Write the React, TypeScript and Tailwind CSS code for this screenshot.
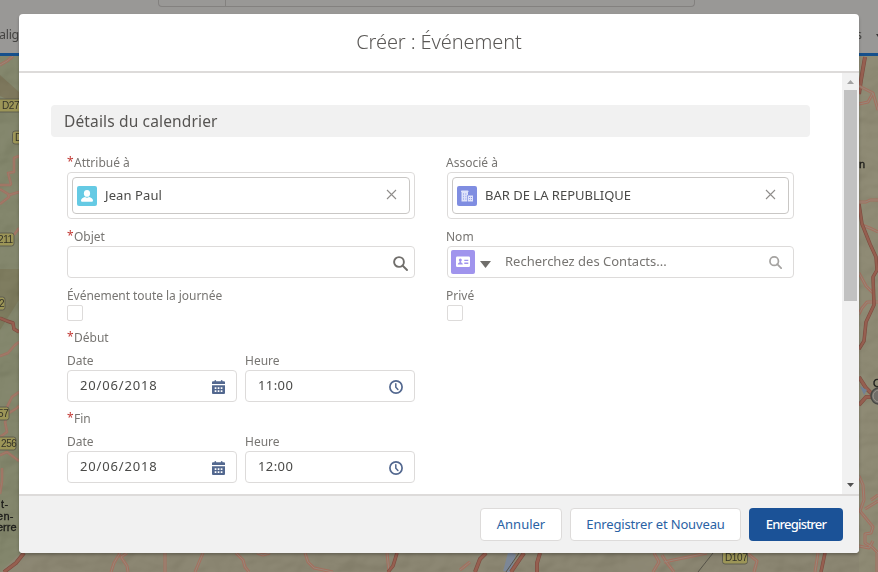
import type { ReactNode } from 'react';

const red = '#965f50';
const pink = '#a4705f';

function Road({ d, w = 3, main = false }: { d: string; w?: number; main?: boolean }) {
  return (
    <g fill="none" strokeLinejoin="round">
      <path d={d} stroke={main ? '#7d4b3f' : pink} strokeWidth={w} />
      <path d={d} stroke={main ? red : '#96887a'} strokeWidth={main ? w - 1.2 : w - 2} />
    </g>
  );
}

function Sign({ x, y, w, text, tx }: { x: number; y: number; w: number; text: string; tx: number }) {
  return (
    <g>
      <rect x={x} y={y} width={w} height={13} rx={2.5} fill="#9c9557" stroke="#5f5e50" strokeWidth={1} />
      <text x={tx} y={y + 10} fontSize={10} letterSpacing={-0.4} fill="#343328">{text}</text>
    </g>
  );
}

function MapBackdrop() {
  return (
    <svg className="absolute inset-x-0 top-14" width="878" height="516" viewBox="0 56 878 516" fontFamily="Liberation Sans, sans-serif">
      <defs>
        <filter id="relief" x="0" y="0" width="100%" height="100%" colorInterpolationFilters="sRGB">
          <feTurbulence type="fractalNoise" baseFrequency="0.025 0.035" numOctaves="3" seed="8" />
          <feDiffuseLighting lightingColor="#ffffff" surfaceScale="6" diffuseConstant="0.56">
            <feDistantLight azimuth="225" elevation="60" />
          </feDiffuseLighting>
        </filter>
      </defs>
      <rect y="56" width="878" height="516" fill="#8b8672" />
      <path d="M0 56H20V553L0 572Z" fill="#83866c" />
      <path d="M0 75L19 92V105L0 96Z" fill="#7d775c" />
      <path d="M0 269H19V300L0 330Z" fill="#7d7b5e" />
      <rect x="859" y="56" width="19" height="516" fill="#8e8a74" />
      <rect y="56" width="878" height="516" filter="url(#relief)" opacity="0.3" className="mix-blend-soft-light" />
      <Road d="M0 65L7 61L13 56" />
      <Road d="M19 156L14 158V172L8 173L11 184L10 185L0 185M0 189L8 194L9 197L0 204M9 195L19 192M14 235L19 228" w={2.5} />
      <Road d="M0 318L7 321L13 323L14 329L19 332" main w={3.5} />
      <Road d="M0 356L8 353L15 345L19 342M19 392L12 397L9 403L6 409L9 413L5 422L7 432L0 437M9 413L17 408L19 406M0 455L7 452L19 461M2 468V481L0 494" w={2.5} />
      <Road d="M24 553L16 563L4 572" main w={4} />
      <Road d="M120 553L114 563L111 572M127 553L121 557L127 566L128 572M165 553V572M203 553L195 572M236 553L243 560L245 567L249 572M305 553L308 562L314 568L333 572M387 553L389 572M257 553L263 555L270 553" />
      <Road d="M397 553L393 566L388 572" main w={3.5} />
      <path d="M512 553L507 572" fill="none" stroke="#7c8797" strokeWidth="8" />
      <path d="M519 553L506 572M713 553L698 572" fill="none" stroke="#565348" strokeWidth="1" />
      <Road d="M486 553L480 559L475 572M540 553L537 563V572M524 553L511 572" main w={4} />
      <Road d="M654 553L659 562L653 572M662 555L667 563L674 572M664 562L707 553M747 553L757 561L754 572M818 553L815 572M470 562L460 570" />
      <Road d="M825 553L821 572" main w={3.5} />
      <Road d="M865 57L861 80L859 94" main w={4} />
      <Road d="M859 86L873 93L868 102L859 104M873 93L878 110M859 202H866L870 200H878M862 225L872 229L878 232M859 273L866 286L873 293M878 302H867L862 308L859 314" />
      <Road d="M859 204L862 224L870 244L876 257L877 270L873 277L874 305L866 322L864 341L859 349" main w={3.5} />
      <Road d="M859 377L866 388L872 394M859 405L866 397H872" main w={4} />
      <path d="M860 386L867 390L864 395Z" fill="#718195" />
      <Road d="M859 476L863 485L864 500L860 511L873 527L871 533L865 534V543L872 547L878 553M859 546L869 548L873 541M865 509L878 501M878 495L871 500M877 553V572" />
      <circle cx="879" cy="396" r="8" fill="#706d68" stroke="#484844" strokeWidth="1.5" />
      <circle cx="879" cy="396" r="6" fill="none" stroke="#99958d" strokeWidth="1" />
      <Sign x={-3} y={99} w={26} text="D27" tx={2} />
      <Sign x={12.5} y={131} w={20} text="D" tx={15} />
      <Sign x={-6} y={233} w={20} text="211" tx={-2} />
      <Sign x={-8} y={297} w={13} text="2" tx={-1} />
      <Sign x={-8} y={407} w={17} text="57" tx={-2} />
      <Sign x={-8} y={437} w={24} text="256" tx={1} />
      <Sign x={722.5} y={551} w={25} text="D107" tx={725} />
      <g fontSize={11} fill="#1b1b19" stroke="#1b1b19" strokeWidth={0.3}>
        <text x={1} y={508} letterSpacing={0.5}>t-</text>
        <text x={-3} y={520} letterSpacing={0.3}>en-</text>
        <text x={-3} y={531}>erre</text>
        <text x={859} y={168}>n</text>
        <text x={873} y={387}>O</text>
      </g>
    </svg>
  );
}

function Label({ children, required, className = '' }: { children: ReactNode; required?: boolean; className?: string }) {
  return (
    <div className={`flex h-[18px] items-center text-[12px] leading-[18px] whitespace-nowrap text-[#777572] ${className}`}>
      {required && <span className="mr-[2px] w-[5px] pb-0.5 text-[12px] text-[#c23934]">*</span>}
      {children}
    </div>
  );
}

function Pill({ icon, text, spacing }: { icon: ReactNode; text: string; spacing: string }) {
  return (
    <div className="h-[47px] rounded border border-[#dddbda] bg-white p-1">
      <div className="flex h-[37px] items-center rounded border border-[#c9c7c5] pr-[12px] pl-1">
        {icon}
        <span className={`ml-2 flex-1 text-[13px] text-[#4a4a48] ${spacing}`}>{text}</span>
        <svg width="11" height="11" viewBox="0 0 11 11" className="mb-0.5" stroke="#8f8d8b" strokeWidth="1.1">
          <path d="M1 1L10 10M10 1L1 10" />
        </svg>
      </div>
    </div>
  );
}

function UserIcon() {
  return (
    <svg width="20" height="20" viewBox="0 0 20 20">
      <rect width="20" height="20" rx="2" fill="#65cae4" />
      <ellipse cx="10" cy="7.4" rx="3.1" ry="3.4" fill="#fff" />
      <path d="M4 14.4c0-1.8 2-2.6 4-3.4.6.5 1.300.8 2 .8s1.400-.3 2-.8c2 .8 4 1.600 4 3.400 0 .9-.6 1.400-1.400 1.400H5.400C4.600 15.800 4 15.300 4 14.400Z" fill="#fff" />
    </svg>
  );
}

function AccountIcon() {
  return (
    <svg width="20" height="20" viewBox="0 0 20 20">
      <rect width="20" height="20" rx="2" fill="#7f8de1" />
      <path d="M4 5.300Q4 4.500 4.800 4.500H10.700Q11.500 4.500 11.500 5.300V6H4ZM4.500 6H11V9H10.300V15.500H4.500ZM11 9.500H16V15.500H11Z" fill="#dfe3fa" />
      <path d="M6 7.200h1v1.500H6zM8.300 7.200h1v1.500h-1zM6 9.700h1v1.500H6zM8.300 9.700h1v1.500h-1zM6 12.200h1v1.500H6zM8.300 12.200h1v1.500h-1z" fill="#a3adec" />
      <path d="M12.200 11h.9v.9h-.9zM14.100 11h.9v.9h-.9zM12.200 13.200h.9v.9h-.9zM14.100 13.200h.9v.9h-.9z" fill="#7f8de1" />
    </svg>
  );
}

function ContactIcon() {
  return (
    <svg width="24" height="24" viewBox="0 0 24 24">
      <rect width="24" height="24" rx="2" fill="#a094ed" />
      <rect x="5" y="6.500" width="14" height="10.500" rx="1.200" fill="#fff" />
      <circle cx="9.300" cy="10" r="1.500" fill="#a094ed" />
      <path d="M6.800 14.500c0-1.500 1.400-1.900 1.900-2.200v-1.300h1.200v1.300c.5.300 1.900.7 1.900 2.200ZM13.300 9.800h4v1.300h-4zM13.300 12.600h4v1.300h-4z" fill="#a094ed" />
    </svg>
  );
}

function SearchIcon({ color, size, width }: { color: string; size: number; width: number }) {
  return (
    <svg width={size} height={size} viewBox="0 0 15 15" fill="none" stroke={color} strokeWidth={width}>
      <circle cx="6" cy="6" r="4.900" />
      <path d="M9.500 9.500L14 14" strokeLinecap="round" />
    </svg>
  );
}

function CalendarIcon() {
  return (
    <svg width="13" height="14" viewBox="0 0 13 14" fill="#53688f">
      <path d="M0 2.300Q0 1.300 1 1.300H2.500V.5Q3.300-.4 4.100.5V1.300H8.900V.5Q9.700-.4 10.500.5V1.300H12Q13 1.300 13 2.300V4H0ZM0 5.200H13V13Q13 14 12 14H1Q0 14 0 13Z" />
      <path d="M2.700 7.200h1.700v1.700H2.700zM5.700 7.200h1.700v1.700H5.700zM8.700 7.200h1.700v1.700H8.700zM2.700 10.200h1.700v1.700H2.700zM5.700 10.200h1.700v1.700H5.700zM8.700 10.200h1.700v1.700H8.700z" fill="#fff" />
    </svg>
  );
}

function ClockIcon() {
  return (
    <svg width="14" height="14" viewBox="0 0 14 14" fill="none" stroke="#53688f">
      <circle cx="7" cy="7" r="6.100" strokeWidth="1.700" />
      <path d="M6.800 3.700V7.200L8.900 9.500" strokeWidth="1.500" strokeLinecap="round" />
    </svg>
  );
}

function Input({ value, icon, spacing }: { value: string; icon: ReactNode; spacing: string }) {
  return (
    <div className="flex h-8 w-[170px] items-center rounded border border-[#dddbda] pr-[11.5px] pl-3">
      <span className={`flex-1 pb-0.5 text-[13px] leading-5 text-[#4a4a48] ${spacing}`}>{value}</span>
      <span className="flex h-full items-end pb-[7px]">{icon}</span>
    </div>
  );
}

function DateTime({ label, time }: { label: string; time: string }) {
  return (
    <div>
      <Label required>{label}</Label>
      <div className="mt-[5px] flex gap-2">
        <div>
          <Label>Date</Label>
          <Input value="20/06/2018" icon={<CalendarIcon />} spacing="tracking-[0.85px]" />
        </div>
        <div>
          <Label>Heure</Label>
          <Input value={time} icon={<ClockIcon />} spacing="tracking-[0.4px]" />
        </div>
      </div>
    </div>
  );
}

function Header() {
  return (
    <div className="absolute inset-x-0 top-0 h-14 border-b-[3px] border-[#16508c] bg-[#999896]">
      <div className="ml-[158px] h-[7px] w-[537px] rounded-b border border-t-0 border-[#83817f]">
        <div className="ml-[66px] h-full w-px bg-[#83817f]" />
      </div>
      <div className="mt-[18px] flex h-5 items-center justify-between text-[12.5px] text-[#454442]">
        <span className="-ml-px tracking-[-0.3px]">alig</span>
        <span className="flex w-[22px] items-center justify-between">
          s
          <svg width="2" height="3" viewBox="0 0 2 3" fill="#343434"><path d="M0 0H2V3Z" /></svg>
        </span>
      </div>
    </div>
  );
}

export default function App() {
  return (
    <div className="relative h-[572px] w-[878px] overflow-hidden bg-[#8b8672] font-['Noto_Sans','Open_Sans',sans-serif]">
      <MapBackdrop />
      <Header />
      <div className="absolute top-[14px] left-[19px] flex h-[539px] w-[840px] flex-col overflow-hidden rounded bg-white shadow-[0_2px_3px_rgba(0,0,0,0.25)]">
        <header className="flex h-[59px] shrink-0 items-center justify-center border-b-2 border-[#dddbda]">
          <h2 className="pb-0.5 text-[20px] font-light tracking-[-0.1px] text-[#5a5856]">Créer : Événement</h2>
        </header>
        <div className="flex h-[421px]">
          <main className="w-[823px] pt-8 pl-8">
            <h3 className="flex h-8 w-[759px] items-center rounded bg-[#f1f1f1] pt-px pl-[13px] text-[15.5px] tracking-[0.15px] text-[#565452]">Détails du calendrier</h3>
            <div className="mt-[17px] flex gap-8 pl-4">
              <section className="w-[348px]">
                <Label required>Attribué à</Label>
                <Pill icon={<UserIcon />} text="Jean Paul" spacing="tracking-[0.1px]" />
                <Label required className="mt-[9px]">Objet</Label>
                <div className="flex h-8 items-center justify-end rounded border border-[#dddbda] pt-0.5 pr-[6px]">
                  <SearchIcon color="#706e6b" size={15} width={1.9} />
                </div>
                <Label className="mt-[9px] tracking-[-0.05px]">Événement toute la journée</Label>
                <div className="h-4 w-4 rounded-xs border border-[#dddbda]" />
                <div className="mt-2 flex flex-col gap-2">
                  <DateTime label="Début" time="11:00" />
                  <DateTime label="Fin" time="12:00" />
                </div>
              </section>
              <section className="w-[347px]">
                <Label className="-ml-px">Associé à</Label>
                <Pill icon={<AccountIcon />} text="BAR DE LA REPUBLIQUE" spacing="tracking-[0px]" />
                <Label className="mt-[9px] -ml-px">Nom</Label>
                <div className="flex h-8 items-center rounded border border-[#dddbda] pr-[11px] pl-[3px]">
                  <ContactIcon />
                  <svg width="11" height="7" viewBox="0 0 11 7" className="mt-1 ml-[5px]" fill="#706e6b"><path d="M0 0H11L5.500 7Z" /></svg>
                  <span className="ml-[14px] flex-1 text-[13px] text-[#777572]">Recherchez des Contacts...</span>
                  <SearchIcon color="#a5a3a1" size={13} width={2} />
                </div>
                <Label className="mt-[9px] -ml-px">Privé</Label>
                <div className="h-4 w-4 rounded-xs border border-[#dddbda]" />
              </section>
            </div>
          </main>
          <div className="flex w-[17px] flex-col items-center bg-[#f1f1f1]">
            <svg width="17" height="17" viewBox="0 0 17 17" fill="#a3a3a3"><path d="M5 11L8.500 7L12 11Z" /></svg>
            <div className="h-[211px] w-[13px] bg-[#c1c1c1]" />
            <svg width="17" height="17" viewBox="0 0 17 17" className="mt-auto" fill="#505050"><path d="M5 6H12L8.500 10Z" /></svg>
          </div>
        </div>
        <footer className="flex flex-1 justify-end gap-2 border-t-2 border-[#dddbda] bg-[#f1f1f1] pt-3 pr-4 text-[13px] text-[#2a62a4]">
          <button className="h-[33px] w-[82px] rounded border border-[#dddbda] bg-white">Annuler</button>
          <button className="h-[33px] w-[171px] rounded border border-[#dddbda] bg-white tracking-[-0.15px] whitespace-nowrap">Enregistrer et Nouveau</button>
          <button className="h-[33px] w-[94px] rounded bg-[#1b5297] font-medium tracking-[-0.8px] text-white">Enregistrer</button>
        </footer>
      </div>
    </div>
  );
}
